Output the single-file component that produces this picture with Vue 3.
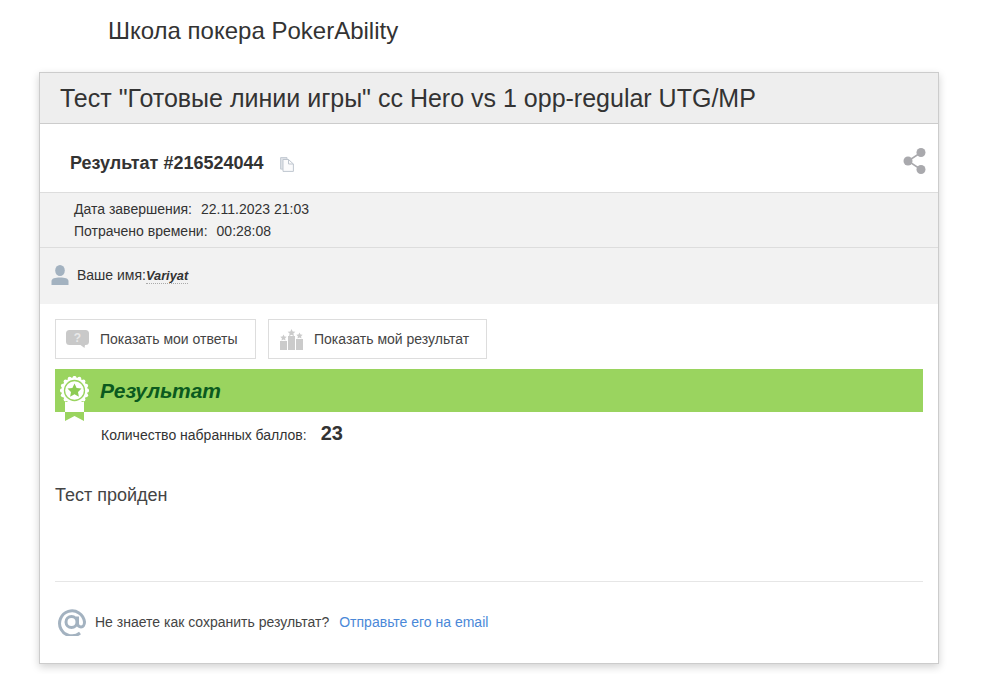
<script setup>
const info = [
  { label: 'Дата завершения:', value: '22.11.2023 21:03' },
  { label: 'Потрачено времени:', value: '00:28:08' }
]
const scallops = Array.from({ length: 16 }, (_, i) => {
  const a = (i / 16) * Math.PI * 2
  return { id: i, cx: 14.5 + 12.6 * Math.cos(a), cy: 14.5 + 12.6 * Math.sin(a) }
})
</script>

<template>
  <div class="page">
    <div class="brand">Школа покера PokerAbility</div>
    <div class="card">
      <div class="title">Тест "Готовые линии игры" cc Hero vs 1 opp-regular UTG/MP</div>
      <div class="result-row">
        <span class="result-id">Результат #216524044</span>
        <svg class="copy" width="14" height="15" viewBox="0 0 14 15">
          <path d="M.6.6h6.400v11.500H.6z" fill="#dfe3e8" stroke="#c3cad2"/>
          <path d="M3 2.500h5.500l4.900 4.500v7.400H3z" fill="#fbfbfc" stroke="#bfc6cf"/>
          <path d="M8.500 2.500V7h4.900" fill="none" stroke="#bfc6cf"/>
        </svg>
        <svg class="share" width="24" height="28" viewBox="0 0 24 28">
          <path d="M18 5.500 5 14l13 8.500" fill="none" stroke="#a9a9ad" stroke-width="1.500"/>
          <circle cx="18" cy="5.500" r="4.500" fill="#a9a9ad"/>
          <circle cx="5" cy="14" r="4.500" fill="#a9a9ad"/>
          <circle cx="18" cy="22.500" r="4.500" fill="#a9a9ad"/>
        </svg>
      </div>
      <div class="info">
        <div v-for="row in info" :key="row.label" class="info-line">
          <span>{{ row.label }}</span><span class="info-value">{{ row.value }}</span>
        </div>
      </div>
      <div class="name-row">
        <svg width="18" height="20" viewBox="0 0 18 20">
          <ellipse cx="9" cy="5.500" rx="4.800" ry="5.500" fill="#a3b2c0"/>
          <path d="M0.500 20v-4c0-2.500 3.500-3.500 8.500-3.500s8.500 1 8.500 3.500v4z" fill="#a3b2c0"/>
        </svg>
        <span class="name-label">Ваше имя:</span><span class="name-value">Variyat</span>
      </div>
      <div class="body">
        <div class="buttons">
          <div class="btn btn-answers">
            <svg width="23" height="20" viewBox="0 0 23 20">
              <path d="M3.500 1h16A3.500 3.500 0 0 1 23 4.500v8a3.500 3.500 0 0 1-3.500 3.500H19l-.5 3-4-3H3.500A3.500 3.500 0 0 1 0 12.500v-8A3.500 3.500 0 0 1 3.500 1z" fill="#c9c9c9"/>
              <text x="11.500" y="13" text-anchor="middle" class="q">?</text>
            </svg>
            <span>Показать мои ответы</span>
          </div>
          <div class="btn btn-result">
            <svg width="23" height="21" viewBox="0 0 23 21">
              <g fill="#cbcbcb">
                <rect x="0" y="12" width="7" height="9"/>
                <rect x="8" y="7" width="7" height="14"/>
                <rect x="16" y="10" width="7" height="11"/>
                <path d="M11.500 0l1.200 2.500 2.700.3-2 1.800.6 2.600-2.500-1.400-2.500 1.400.6-2.600-2-1.800 2.700-.3z"/>
                <path d="M3.500 5.500l1 2 2.200.3-1.600 1.500.4 2.200-2-1.100-2 1.100.4-2.200L.300 7.800l2.200-.3z"/>
                <path d="M19.500 3.500l1 2 2.200.3-1.600 1.500.4 2.200-2-1.100-2 1.100.4-2.200-1.600-1.500 2.200-.3z"/>
              </g>
            </svg>
            <span>Показать мой результат</span>
          </div>
        </div>
        <div class="banner">
          <svg class="medal" width="29" height="45" viewBox="0 0 29 45">
            <path d="M5 26h19v19l-9.500-5L5 45z" fill="#9ad45f"/>
            <rect x="5" y="26" width="19" height="10" fill="#fff"/>
            <circle v-for="s in scallops" :key="s.id" :cx="s.cx" :cy="s.cy" r="2" fill="#fff"/>
            <circle cx="14.500" cy="14.500" r="13" fill="#fff"/>
            <circle cx="14.500" cy="14.500" r="10" fill="none" stroke="#9ad45f" stroke-width="1.300"/>
            <path d="M14.500 7.500l2.100 4.400 4.900.6-3.500 3.400.9 4.800-4.400-2.400-4.400 2.400.9-4.800-3.500-3.400 4.900-.6z" fill="#8ccb52"/>
          </svg>
          <span class="banner-text">Результат</span>
        </div>
        <div class="score">
          <span class="score-label">Количество набранных баллов:</span>
          <span class="score-value">23</span>
        </div>
        <div class="passed">Тест пройден</div>
        <div class="footer">
          <svg class="at" width="28" height="28" viewBox="0 0 28 28">
            <g fill="none" stroke="#a3b2c0" stroke-width="3">
              <circle cx="13.500" cy="14" r="5.500"/>
              <path d="M22 25A12.500 12.500 0 1 1 26.500 14c0 3-1.500 5-3.500 5s-3.500-1.500-3.500-3.500V8.500"/>
            </g>
          </svg>
          <span class="footer-text">Не знаете как сохранить результат?</span>
          <a class="footer-link">Отправьте его на email</a>
        </div>
      </div>
    </div>
  </div>
</template>

<style>
html, body { margin: 0; background: #fff; }
</style>

<style scoped>
.page {
  height: 674px;
  box-sizing: border-box;
  padding: 17px 61px 0 39px;
  font-family: "Liberation Sans", Arial, sans-serif;
  color: #333;
  overflow: hidden;
}
.brand {
  font-size: 24px;
  line-height: 28px;
  padding-left: 69px;
  margin-bottom: 27px;
}
.card {
  box-sizing: border-box;
  width: 900px;
  height: 592px;
  border: 1px solid #ccc;
  box-shadow: 0 3px 8px rgba(0, 0, 0, 0.18);
  background: #fff;
}
.title {
  box-sizing: border-box;
  height: 51px;
  background: #eee;
  border-bottom: 1px solid #ccc;
  font-size: 25px;
  line-height: 50px;
  padding-left: 20px;
}
.result-row {
  box-sizing: border-box;
  height: 69px;
  display: flex;
  align-items: center;
  padding: 0 11px 0 30px;
  border-bottom: 1px solid #ddd;
}
.result-id { font-size: 18px; font-weight: 700; margin-top: 10px; }
.copy { margin-left: 16px; margin-top: 12px; }
.share { margin-left: auto; margin-top: 6px; }
.info {
  box-sizing: border-box;
  height: 55px;
  background: #f2f2f2;
  border-bottom: 1px solid #ddd;
  padding: 5px 0 0 34px;
  font-size: 14px;
  line-height: 22px;
}
.info-value { margin-left: 9px; }
.name-row {
  box-sizing: border-box;
  height: 56px;
  background: #f2f2f2;
  display: flex;
  align-items: center;
  padding: 0 0 2px 11px;
  font-size: 14px;
}
.name-label { margin-left: 8px; }
.name-value {
  font-size: 12.8px;
  font-weight: 700;
  font-style: italic;
  border-bottom: 1px dotted #aaa;
  margin-top: 1px;
}
.body { padding: 15px 15px 0; }
.buttons { display: flex; gap: 12px; }
.btn {
  box-sizing: border-box;
  height: 40px;
  border: 1px solid #ddd;
  display: flex;
  align-items: center;
  font-size: 14px;
  color: #444;
}
.btn-answers { width: 201px; padding-left: 10px; gap: 11px; }
.btn-result { width: 219px; padding-left: 11px; gap: 11px; }
.q { font-size: 12px; font-weight: 700; fill: #e8e8e8; font-family: "Liberation Sans", sans-serif; }
.banner {
  position: relative;
  height: 43px;
  margin-top: 10px;
  background: #9ad45f;
  display: flex;
  align-items: center;
  padding-left: 45px;
}
.medal { position: absolute; left: 5px; top: 7px; }
.banner-text {
  font-size: 21px;
  font-weight: 700;
  font-style: italic;
  color: #0b5a1e;
}
.score {
  display: flex;
  align-items: center;
  height: 42px;
  padding-left: 46px;
}
.score-label { font-size: 14px; margin-top: 3px; }
.score-value { font-size: 20px; font-weight: 700; margin-left: 14px; }
.passed {
  font-size: 18px;
  line-height: 22px;
  margin-top: 30px;
  color: #444;
}
.footer {
  margin-top: 75px;
  border-top: 1px solid #e6e6e6;
  height: 80px;
  display: flex;
  align-items: center;
  font-size: 14px;
}
.at { margin-left: 3px; margin-right: 9px; }
.footer-text { color: #444; }
.footer-link { color: #4a88d8; margin-left: 10px; }
</style>
